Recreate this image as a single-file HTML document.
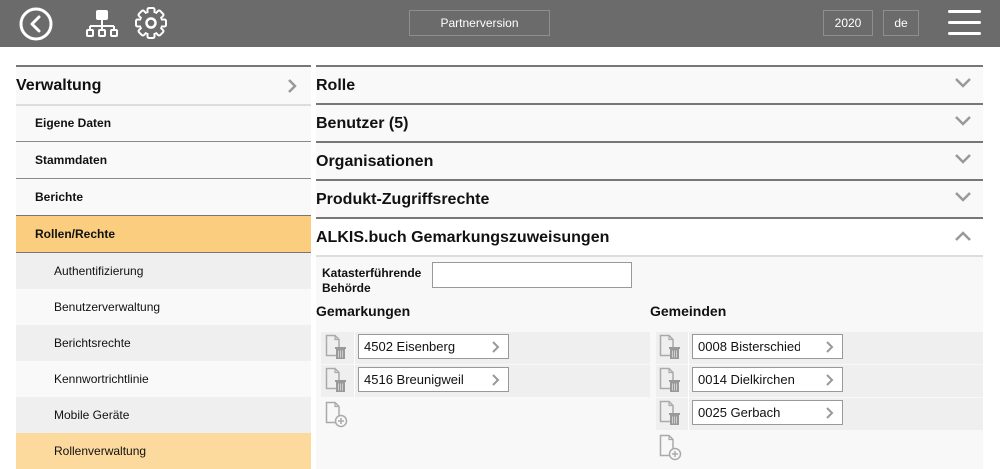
<!DOCTYPE html>
<html><head><meta charset="utf-8"><style>
*{box-sizing:border-box;margin:0;padding:0}
body{width:1000px;height:469px;overflow:hidden;background:#fff;font-family:"Liberation Sans",Arial,sans-serif;position:relative;color:#111}
.a{position:absolute}
.top{left:0;top:0;width:1000px;height:47px;background:#6b6b6b}
.tb{border:1px solid #8e8e8e;color:#fff;font-size:12px;text-align:center;line-height:24px;height:26px;top:10px}
.si{position:absolute;left:16px;width:295px;font-size:12px}
.rh{position:absolute;left:316px;width:667px;height:36px;background:#f9f9f9;font-weight:bold;font-size:16px;line-height:38px}
.bd{position:absolute;left:316px;width:667px;height:2px;background:#777}
.row{position:absolute;background:#efefef;height:32px}
.ib{position:absolute;background:#fff;border:1px solid #999;height:25px;width:151px;font-size:13px;line-height:23px;padding-left:5px;white-space:nowrap;overflow:hidden}
.chev{position:absolute;right:8px;top:6px}
</style></head><body>
<div class="a top"></div>
<svg class="a" style="left:18px;top:6px" width="36" height="36" viewBox="0 0 36 36"><circle cx="18" cy="18" r="15" fill="none" stroke="#fff" stroke-width="3"/><path d="M21 11 L14 18 L21 25" fill="none" stroke="#fff" stroke-width="3" stroke-linecap="round" stroke-linejoin="round"/></svg>
<svg class="a" style="left:86px;top:9px" width="32" height="30" viewBox="0 0 32 30"><rect x="10" y="1" width="12" height="10" rx="2" fill="#fff"/><path d="M16 11V17M4 17H28M4 17V21M16 17V21M28 17V21" stroke="#fff" stroke-width="2" fill="none"/><rect x="1" y="21" width="6" height="6" rx="1" fill="none" stroke="#fff" stroke-width="2"/><rect x="13" y="21" width="6" height="6" rx="1" fill="none" stroke="#fff" stroke-width="2"/><rect x="25" y="21" width="6" height="6" rx="1" fill="none" stroke="#fff" stroke-width="2"/></svg>
<svg class="a" style="left:134px;top:6px" width="34" height="34" viewBox="0 0 34 34">
<g fill="#6b6b6b" stroke="#fff" stroke-width="2">
<rect x="13.5" y="2" width="7" height="8" rx="1.5"/>
<rect x="13.5" y="2" width="7" height="8" rx="1.5" transform="rotate(45 17 17)"/>
<rect x="13.5" y="2" width="7" height="8" rx="1.5" transform="rotate(90 17 17)"/>
<rect x="13.5" y="2" width="7" height="8" rx="1.5" transform="rotate(135 17 17)"/>
<rect x="13.5" y="2" width="7" height="8" rx="1.5" transform="rotate(180 17 17)"/>
<rect x="13.5" y="2" width="7" height="8" rx="1.5" transform="rotate(225 17 17)"/>
<rect x="13.5" y="2" width="7" height="8" rx="1.5" transform="rotate(270 17 17)"/>
<rect x="13.5" y="2" width="7" height="8" rx="1.5" transform="rotate(315 17 17)"/>
</g>
<circle cx="17" cy="17" r="10.5" fill="#6b6b6b"/>
<circle cx="17" cy="17" r="11.5" fill="none" stroke="#fff" stroke-width="2" stroke-dasharray="5 4" stroke-dashoffset="0" opacity="0"/>
<circle cx="17" cy="17" r="4.5" fill="none" stroke="#fff" stroke-width="2.5"/></svg>
<div class="a tb" style="left:409px;width:141px">Partnerversion</div>
<div class="a tb" style="left:823px;width:50px">2020</div>
<div class="a tb" style="left:883px;width:36px">de</div>
<div class="a" style="left:948px;top:10px;width:33px;height:3px;background:#fff;border-radius:2px"></div>
<div class="a" style="left:948px;top:21px;width:33px;height:3px;background:#fff;border-radius:2px"></div>
<div class="a" style="left:948px;top:32px;width:33px;height:3px;background:#fff;border-radius:2px"></div>

<div class="si" style="top:65px;height:2px;background:#777"></div>
<div class="si" style="top:67px;height:37px;background:#f9f9f9;font-weight:bold;font-size:16px;line-height:38px">Verwaltung<svg style="position:absolute;right:14px;top:12px" width="10" height="14"><path d="M2 1L8 7L2 13" fill="none" stroke="#999" stroke-width="2.5"/></svg></div>
<div class="si" style="top:104px;height:2px;background:#ddd"></div>
<div class="si" style="top:106px;height:35px;background:#f9f9f9;font-weight:bold;line-height:35px;padding-left:19px">Eigene Daten</div>
<div class="si" style="top:141px;height:1px;background:#888"></div>
<div class="si" style="top:142px;height:36px;background:#f9f9f9;font-weight:bold;line-height:36px;padding-left:19px">Stammdaten</div>
<div class="si" style="top:178px;height:1px;background:#888"></div>
<div class="si" style="top:179px;height:36px;background:#f9f9f9;font-weight:bold;line-height:36px;padding-left:19px">Berichte</div>
<div class="si" style="top:215px;height:1px;background:#777"></div>
<div class="si" style="top:216px;height:36px;background:#fbcd7e;font-weight:bold;line-height:36px;padding-left:19px">Rollen/Rechte</div>
<div class="si" style="top:252px;height:1px;background:#777"></div>
<div class="si" style="top:253px;height:36px;background:#efefef;line-height:36px;padding-left:38px">Authentifizierung</div>
<div class="si" style="top:289px;height:36px;background:#f9f9f9;line-height:36px;padding-left:38px">Benutzerverwaltung</div>
<div class="si" style="top:325px;height:36px;background:#efefef;line-height:36px;padding-left:38px">Berichtsrechte</div>
<div class="si" style="top:361px;height:36px;background:#f9f9f9;line-height:36px;padding-left:38px">Kennwortrichtlinie</div>
<div class="si" style="top:397px;height:36px;background:#efefef;line-height:36px;padding-left:38px">Mobile Geräte</div>
<div class="si" style="top:433px;height:36px;background:#fcd99c;line-height:36px;padding-left:38px">Rollenverwaltung</div>

<div class="bd" style="top:65px"></div>
<div class="rh" style="top:67px">Rolle</div>
<div class="bd" style="top:103px"></div>
<div class="rh" style="top:105px">Benutzer (5)</div>
<div class="bd" style="top:141px"></div>
<div class="rh" style="top:143px">Organisationen</div>
<div class="bd" style="top:179px"></div>
<div class="rh" style="top:181px">Produkt-Zugriffsrechte</div>
<div class="bd" style="top:217px"></div>
<div class="rh" style="top:219px;background:#fff">ALKIS.buch Gemarkungszuweisungen</div>
<svg class="a" style="left:955px;top:78px" width="16" height="10"><path d="M1 1L8 8L15 1" fill="none" stroke="#999" stroke-width="2.5"/></svg>
<svg class="a" style="left:955px;top:116px" width="16" height="10"><path d="M1 1L8 8L15 1" fill="none" stroke="#999" stroke-width="2.5"/></svg>
<svg class="a" style="left:955px;top:154px" width="16" height="10"><path d="M1 1L8 8L15 1" fill="none" stroke="#999" stroke-width="2.5"/></svg>
<svg class="a" style="left:955px;top:192px" width="16" height="10"><path d="M1 1L8 8L15 1" fill="none" stroke="#999" stroke-width="2.5"/></svg>
<svg class="a" style="left:955px;top:231px" width="16" height="10"><path d="M1 9L8 2L15 9" fill="none" stroke="#999" stroke-width="2.5"/></svg>
<div class="a" style="left:316px;top:255px;width:667px;height:214px;background:#f8f8f8;border-top:2px solid #ddd"></div>

<div class="a" style="left:322px;top:266px;font-size:12px;font-weight:bold;line-height:15px">Katasterführende<br>Behörde</div>
<div class="a" style="left:432px;top:262px;width:200px;height:26px;background:#fff;border:1px solid #999"></div>
<div class="a" style="left:316px;top:303px;font-size:14px;font-weight:bold">Gemarkungen</div>
<div class="a" style="left:650px;top:303px;font-size:14px;font-weight:bold">Gemeinden</div>

<div class="row" style="left:321px;top:332px;width:329px"></div>
<div class="row" style="left:321px;top:365px;width:329px"></div>
<div class="row" style="left:656px;top:332px;width:327px"></div>
<div class="row" style="left:656px;top:365px;width:327px"></div>
<div class="row" style="left:656px;top:398px;width:327px"></div>
<div class="a" style="left:354px;top:332px;width:1px;height:65px;background:#fff"></div>
<div class="a" style="left:688px;top:332px;width:1px;height:98px;background:#fff"></div>

<div class="ib" style="left:358px;top:334px">4502 Eisenberg<svg class="chev" width="8" height="12"><path d="M1 1L6 6L1 11" fill="none" stroke="#999" stroke-width="2"/></svg></div>
<div class="ib" style="left:358px;top:367px">4516 Breunigweil<svg class="chev" width="8" height="12"><path d="M1 1L6 6L1 11" fill="none" stroke="#999" stroke-width="2"/></svg></div>
<div class="ib" style="left:692px;top:334px"><span style="display:inline-block;width:102px;overflow:hidden;vertical-align:top">0008 Bisterschied</span><svg class="chev" width="8" height="12"><path d="M1 1L6 6L1 11" fill="none" stroke="#999" stroke-width="2"/></svg></div>
<div class="ib" style="left:692px;top:367px">0014 Dielkirchen<svg class="chev" width="8" height="12"><path d="M1 1L6 6L1 11" fill="none" stroke="#999" stroke-width="2"/></svg></div>
<div class="ib" style="left:692px;top:400px">0025 Gerbach<svg class="chev" width="8" height="12"><path d="M1 1L6 6L1 11" fill="none" stroke="#999" stroke-width="2"/></svg></div>

<svg width="0" height="0" style="position:absolute"><defs>
<g id="del"><path d="M1.5 1.5H10L14 5.5V21.5H1.5Z" fill="none" stroke="#aaa" stroke-width="1.5"/><path d="M10 1.5V5.5H14" fill="none" stroke="#aaa" stroke-width="1.2"/><rect x="10" y="13" width="11" height="2" fill="#999"/><rect x="11" y="15" width="9" height="10" fill="#999"/><path d="M13.5 16.5V23.5M15.5 16.5V23.5M17.5 16.5V23.5" stroke="#ddd" stroke-width="0.8"/></g>
<g id="add"><path d="M1.5 1.5H10L14 5.5V21.5H1.5Z" fill="none" stroke="#aaa" stroke-width="1.5"/><path d="M10 1.5V5.5H14" fill="none" stroke="#aaa" stroke-width="1.2"/><circle cx="16" cy="20" r="5.5" fill="#f8f8f8" stroke="#aaa" stroke-width="1.5"/><path d="M16 17V23M13 20H19" stroke="#aaa" stroke-width="1.5"/></g>
</defs></svg>
<svg class="a" style="left:325px;top:334px" width="24" height="27"><use href="#del"/></svg>
<svg class="a" style="left:325px;top:367px" width="24" height="27"><use href="#del"/></svg>
<svg class="a" style="left:325px;top:401px" width="24" height="27"><use href="#add"/></svg>
<svg class="a" style="left:659px;top:334px" width="24" height="27"><use href="#del"/></svg>
<svg class="a" style="left:659px;top:367px" width="24" height="27"><use href="#del"/></svg>
<svg class="a" style="left:659px;top:400px" width="24" height="27"><use href="#del"/></svg>
<svg class="a" style="left:659px;top:434px" width="24" height="27"><use href="#add"/></svg>
</body></html>
